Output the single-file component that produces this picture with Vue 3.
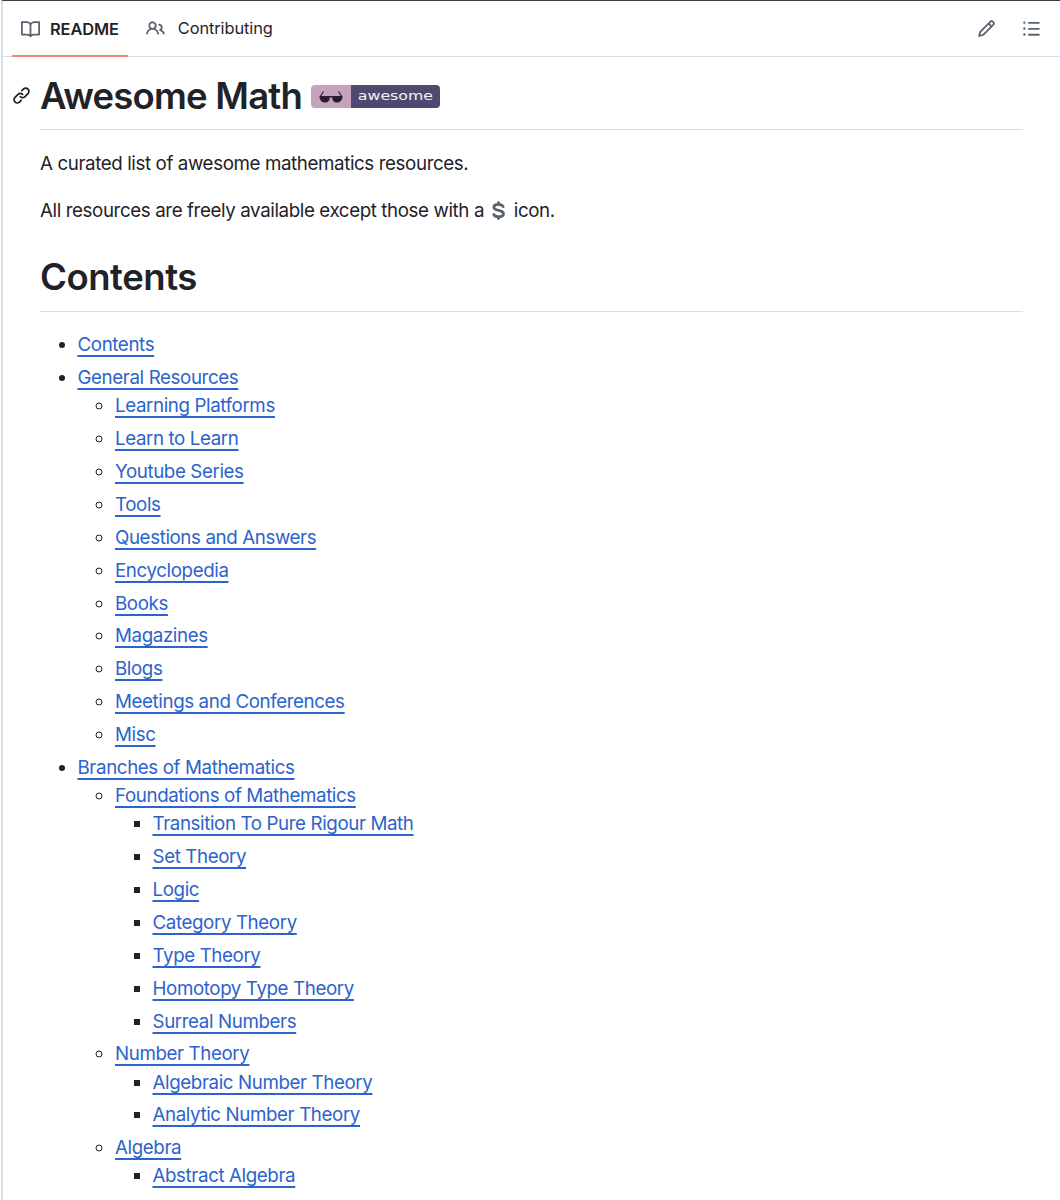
<script setup>
const tree = [
  { t: 'Contents' },
  { t: 'General Resources', c: ['Learning Platforms','Learn to Learn','Youtube Series','Tools','Questions and Answers','Encyclopedia','Books','Magazines','Blogs','Meetings and Conferences','Misc'].map(t => ({ t })) },
  { t: 'Branches of Mathematics', c: [
    { t: 'Foundations of Mathematics', c: ['Transition To Pure Rigour Math','Set Theory','Logic','Category Theory','Type Theory','Homotopy Type Theory','Surreal Numbers'].map(t => ({ t })) },
    { t: 'Number Theory', c: ['Algebraic Number Theory','Analytic Number Theory'].map(t => ({ t })) },
    { t: 'Algebra', c: ['Abstract Algebra'].map(t => ({ t })) },
  ] },
]
</script>

<template>
  <div class="page">
    <nav class="tabs">
      <div class="tab-group">
        <div class="tab active">
          <svg class="ico" viewBox="0 0 16 16" width="19" height="19"><path fill="#59636e" d="M0 1.75A.75.75 0 0 1 .75 1h4.253c1.227 0 2.317.59 3 1.501A3.743 3.743 0 0 1 11.006 1h4.245a.75.75 0 0 1 .75.75v10.5a.75.75 0 0 1-.75.75h-4.507a2.25 2.25 0 0 0-1.591.659l-.622.621a.75.75 0 0 1-1.06 0l-.622-.621A2.25 2.25 0 0 0 5.258 13H.75a.75.75 0 0 1-.75-.75Zm7.251 10.324.004-5.073-.002-2.253A2.25 2.25 0 0 0 5.003 2.5H1.5v9h3.757a3.75 3.75 0 0 1 1.994.574ZM8.755 4.75l-.004 7.322a3.752 3.752 0 0 1 1.992-.572H14.5v-9h-3.495a2.25 2.25 0 0 0-2.25 2.25Z"/></svg>
          <span class="tab-label strong">README</span>
        </div>
        <div class="tab second">
          <svg class="ico" viewBox="0 0 16 16" width="19" height="19"><path fill="#59636e" d="M2 5.5a3.5 3.5 0 1 1 5.898 2.549 5.508 5.508 0 0 1 3.034 4.084.75.75 0 1 1-1.482.235 4 4 0 0 0-7.9 0 .75.75 0 0 1-1.482-.236A5.507 5.507 0 0 1 3.102 8.05 3.493 3.493 0 0 1 2 5.5ZM11 4a3.001 3.001 0 0 1 2.22 5.018 5.01 5.01 0 0 1 2.56 3.012.749.749 0 0 1-.885.954.752.752 0 0 1-.549-.514 3.507 3.507 0 0 0-2.522-2.372.75.75 0 0 1-.574-.73v-.352a.75.75 0 0 1 .416-.672A1.5 1.5 0 0 0 11 5.5.75.75 0 0 1 11 4Zm-5.5-.5a2 2 0 1 0-.001 3.999A2 2 0 0 0 5.5 3.5Z"/></svg>
          <span class="tab-label">Contributing</span>
        </div>
      </div>
      <div class="tab-actions">
        <svg viewBox="0 0 16 16" width="19" height="19"><path fill="#59636e" d="M11.013 1.427a1.75 1.75 0 0 1 2.474 0l1.086 1.086a1.75 1.75 0 0 1 0 2.474l-8.61 8.61c-.21.21-.47.364-.756.445l-3.251.93a.75.75 0 0 1-.927-.928l.929-3.25c.081-.286.235-.547.445-.758l8.61-8.61Zm.176 4.823L9.75 4.81l-6.286 6.287a.253.253 0 0 0-.064.108l-.558 1.953 1.953-.558a.253.253 0 0 0 .108-.064Zm1.238-3.763a.25.25 0 0 0-.354 0L10.811 3.75l1.439 1.44 1.263-1.263a.25.25 0 0 0 0-.354Z"/></svg>
        <svg viewBox="0 0 16 16" width="19" height="19"><path fill="#59636e" d="M5.750 2.500h8.500a.75.75 0 0 1 0 1.500h-8.500a.75.75 0 0 1 0-1.500Zm0 5h8.500a.75.75 0 0 1 0 1.500h-8.500a.75.75 0 0 1 0-1.500Zm0 5h8.500a.75.75 0 0 1 0 1.500h-8.500a.75.75 0 0 1 0-1.500ZM2 14a1 1 0 1 1 0-2 1 1 0 0 1 0 2Zm1-6a1 1 0 1 1-2 0 1 1 0 0 1 2 0ZM2 4a1 1 0 1 1 0-2 1 1 0 0 1 0 2Z"/></svg>
      </div>
    </nav>

    <article class="body">
      <h1 class="title h1">
        <svg class="anchor" viewBox="0 0 16 16" width="19" height="19"><path fill="#1f2328" d="m7.775 3.275 1.25-1.25a3.5 3.5 0 1 1 4.95 4.95l-2.5 2.5a3.5 3.5 0 0 1-4.95 0 .751.751 0 0 1 .018-1.042.751.751 0 0 1 1.042-.018 1.998 1.998 0 0 0 2.83 0l2.5-2.5a2.002 2.002 0 0 0-2.83-2.83l-1.25 1.25a.751.751 0 0 1-1.042-.018.751.751 0 0 1-.018-1.042Zm-4.69 9.64a1.998 1.998 0 0 0 2.83 0l1.25-1.25a.751.751 0 0 1 1.042.018.751.751 0 0 1 .018 1.042l-1.25 1.25a3.5 3.5 0 1 1-4.95-4.95l2.5-2.5a3.5 3.5 0 0 1 4.95 0 .751.751 0 0 1-.018 1.042.751.751 0 0 1-1.042.018 1.998 1.998 0 0 0-2.83 0l-2.5 2.5a1.998 1.998 0 0 0 0 2.83Z"/></svg>
        <span>Awesome Math</span>
        <span class="badge">
          <span class="badge-left">
            <svg viewBox="0 0 24 13" width="24" height="13"><path fill="none" stroke="#2c1c30" stroke-width="1.2" d="M1 7 4.500 1.500M23 7 19.500 1.500"/><path fill="#2c1c30" d="M.5 6h10.200c.4 3.800-1 6.500-4.600 6.500S.5 10 .5 6ZM13.300 6H23.500c0 4-2 6.500-5.600 6.500S12.900 9.800 13.300 6ZM10 6h4v1.600h-4Z"/></svg>
          </span>
          <span class="badge-right"><span class="badge-text">awesome</span></span>
        </span>
      </h1>
      <p class="p1">A curated list of awesome mathematics resources.</p>
      <p class="p2">All resources are freely available except those with a <svg class="dollar" viewBox="0 0 16 20" width="15" height="19"><path fill="none" stroke="#59636e" stroke-width="3" stroke-linecap="round" d="M13 5.800C12 4 10 3.400 8 3.400 5.300 3.400 3 4.500 3 6.600 3 11 13.300 8.800 13.300 13.400 13.300 15.600 11 16.600 8 16.600 5.800 16.600 3.800 16 3 14.300M8 1.500v2M8 16.500v2"/></svg> icon.</p>
      <h2 class="title h2">Contents</h2>
      <ul class="lvl1">
        <li v-for="a in tree" :key="a.t">
          <a>{{ a.t }}</a>
          <ul v-if="a.c" class="lvl2">
            <li v-for="b in a.c" :key="b.t">
              <a>{{ b.t }}</a>
              <ul v-if="b.c" class="lvl3">
                <li v-for="c in b.c" :key="c.t"><a>{{ c.t }}</a></li>
              </ul>
            </li>
          </ul>
        </li>
      </ul>
    </article>
  </div>
</template>

<style>
html, body { margin: 0; background: #fff; overflow: hidden; }
</style>

<style scoped>
.page {
  height: 1200px;
  overflow: hidden;
  box-sizing: border-box;
  border-top: 1px solid #3a3d41;
  border-left: 2px solid #d8dee4;
  margin-left: 1px;
  font-family: Inter, "Liberation Sans", sans-serif;
  font-size: 18.75px;
  line-height: 28.15px;
  letter-spacing: -0.4px;
  color: #1f2328;
}
.tabs {
  height: 55px;
  display: flex;
  justify-content: space-between;
  align-items: stretch;
  border-bottom: 1px solid #d8dee4;
}
.tab-group { display: flex; padding-left: 9px; }
.tab {
  display: flex;
  align-items: center;
  gap: 10px;
  padding: 0 8px 0 9px;
  font-size: 16.4px;
  letter-spacing: -0.1px;
}
.tab.active {
  box-shadow: inset 0 -2px 0 #ee8a70;
  margin-bottom: -1px;
  padding-right: 9px;
}
.tab.second { margin-left: 9px; gap: 13px; }
.strong { font-weight: 600; }
.tab-actions {
  display: flex;
  align-items: center;
  gap: 26px;
  padding-right: 19px;
}
.body { padding: 0 37px 0 37px; }
.title {
  position: relative;
  margin: 0;
  display: flex;
  align-items: center;
  font-size: 36.5px;
  font-weight: 600;
  line-height: 47px;
  border-bottom: 1px solid #d8dee4;
  box-sizing: border-box;
}
.h1 { height: 73px; padding-top: 6px; letter-spacing: -0.8px; }
.anchor { position: absolute; left: -28px; top: 29px; }
.badge {
  display: flex;
  height: 23px;
  margin-left: 9px;
  border-radius: 4px;
  overflow: hidden;
  font-weight: 400;
  letter-spacing: 0;
}
.badge-left {
  width: 40px;
  background: #c6a3bd;
  display: flex;
  align-items: center;
  justify-content: center;
}
.badge-right {
  width: 89px;
  background: #51486f;
  color: #f3f1f6;
  display: flex;
  align-items: center;
  justify-content: center;
}
.badge-text {
  display: inline-block;
  font-family: "DejaVu Sans", sans-serif;
  font-size: 11.5px;
  line-height: 21px;
  transform: scaleX(1.37);
}
p { margin: 0; }
.p1 { margin-top: 20px; }
.p2 { margin-top: 19px; }
.dollar { vertical-align: -3px; margin: 0 3px 0 2px; }
.h2 { height: 58px; margin-top: 29px; align-items: flex-start; letter-spacing: -0.45px; }
ul { margin: 0; padding-left: 37.5px; }
.lvl1 { margin-top: 19px; list-style: disc; }
.lvl2 { list-style: circle; }
.lvl3 { list-style: square; }
li + li { margin-top: 4.73px; }
a {
  color: #2d63cc;
  text-decoration: underline;
  text-underline-offset: 4px;
  text-decoration-thickness: 1.5px;
}
</style>
